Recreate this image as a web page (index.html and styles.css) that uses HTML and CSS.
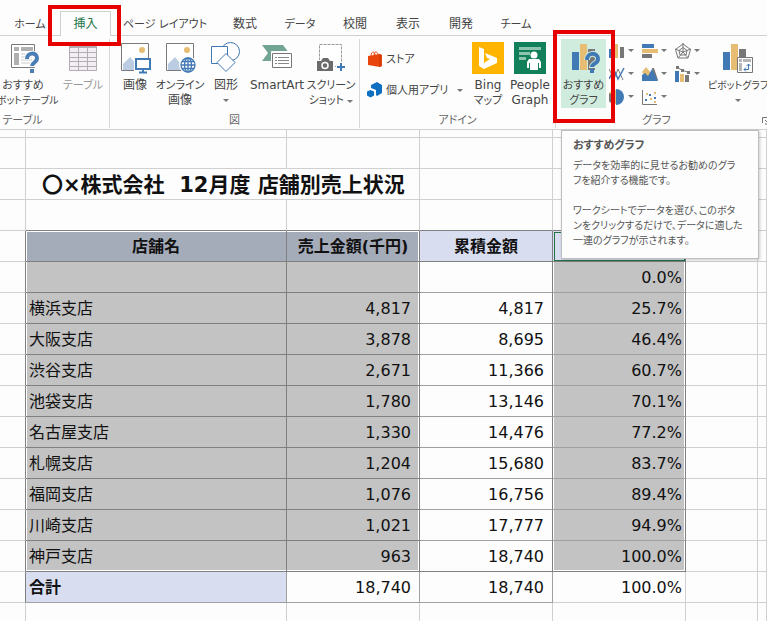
FILE: index.html
```html
<!DOCTYPE html>
<html lang="ja">
<head>
<meta charset="utf-8">
<title>店舗別売上状況</title>
<link rel="stylesheet" href="styles.css">
</head>
<body>
<header class="ribbon">
  <nav class="tabs">
    <a href="#" class="kana">ホーム</a>
    <a href="#" class="active">挿入</a>
    <a href="#" class="kana">ページ レイアウト</a>
    <a href="#">数式</a>
    <a href="#" class="kana">データ</a>
    <a href="#">校閲</a>
    <a href="#">表示</a>
    <a href="#">開発</a>
    <a href="#" class="kana">チーム</a>
  </nav>
  <div class="groups">
    <section class="group">
      <div class="items tables">
        <button class="big">
          <svg width="32" height="32" viewBox="0 0 32 32"><path d="M4.500 2.500H27.500V25.500H4.500z" fill="#fff" stroke="#7a7a7a"/><path d="M7 5h5v4H7zM14 5h12v4H14zM7 11h5v12H7z" fill="#b0b0b0"/><path d="M14 12h11M14 15h11M14 18h11M14 21h11" stroke="#ccc"/><path d="M20 17c0-7 10-7 10-1 0 5-5 4-5 9" fill="none" stroke="#fff" stroke-width="6"/><path d="M20 17c0-7 10-7 10-1 0 5-5 4-5 8" fill="none" stroke="#4a7eb5" stroke-width="4"/><path d="M23 27h4v4h-4z" fill="#4a7eb5"/></svg>
          <span class="kana">おすすめ</span><span class="long">ピボットテーブル</span>
        </button>
        <button class="big dim">
          <svg width="32" height="32" viewBox="0 0 32 32"><path d="M2.500 1.500H29.500V28.500H2.500z" fill="#f3eef3" stroke="#b3adb3"/><path d="M2 1h28v5H2z" fill="#b3adb3"/><path d="M2 10.500h28M2 15.500h28M2 19.500h28M2 24.500h28M11.500 6v22M20.500 6v22" stroke="#b3adb3"/></svg>
          <span class="kana">テーブル</span>
        </button>
      </div>
      <h2>テーブル</h2>
    </section>
    <section class="group">
      <div class="items shapes">
        <button class="big">
          <svg width="32" height="32" viewBox="0 0 32 32"><path d="M2.500 1.500h27v27h-27z" fill="#fff" stroke="#7a7a7a"/><circle cx="23" cy="8" r="3" fill="#e6bd72"/><path d="M4 28V22l7-7 6 7v6z" fill="#bccde3"/><path d="M15 16h17v14H15z" fill="#fff"/><path d="M17 17h14v10H17z" fill="#fff" stroke="#4179b5" stroke-width="2"/><path d="M24 27v3M20 30.500h8" stroke="#4179b5" stroke-width="2"/></svg>
          <span>画像</span>
        </button>
        <button class="big">
          <svg width="32" height="32" viewBox="0 0 32 32"><path d="M2.500 1.500h27v27h-27z" fill="#fff" stroke="#7a7a7a"/><circle cx="23" cy="8" r="3" fill="#e6bd72"/><path d="M4 28V22l7-7 6 7v6z" fill="#bccde3"/><circle cx="24" cy="23" r="9" fill="#fff"/><g fill="#fff" stroke="#4179b5" stroke-width="1.300"><circle cx="24" cy="23" r="7"/><ellipse cx="24" cy="23" rx="3.500" ry="7"/><path d="M17 23h14M24 16v14M18 19.500h12M18 26.500h12"/></g></svg>
          <span class="kana">オンライン</span><span>画像</span>
        </button>
        <button class="big">
          <svg width="32" height="32" viewBox="0 0 32 32"><g fill="#fff" stroke="#4179b5"><circle cx="20.500" cy="9.500" r="9"/><path d="M1.500 4.500h16v17h-16z"/><path d="M16 11.500 25 20.500 16 29.500 7 20.500z"/></g></svg>
          <span>図形</span><span><i class="arrow"></i></span>
        </button>
        <button class="big">
          <svg width="32" height="32" viewBox="0 0 32 32"><path d="M1 3h21l6 8-6 8H1l6-8z" fill="#72a493"/><path d="M10 9h22v17H10z" fill="#fff"/><path d="M11.500 11.500h19v14h-19z" fill="#fff" stroke="#777"/><path d="M14 15.500h2M14 18.500h2M14 21.500h2M17 15.500h11M17 18.500h11M17 21.500h11" stroke="#888"/></svg>
          <span>SmartArt</span>
        </button>
        <button class="big">
          <svg width="32" height="32" viewBox="0 0 32 32"><path d="M4.500 2.500h22v22h-22z" fill="#fff" stroke="#999" stroke-dasharray="3 1"/><path d="M0 18h20v13H0z" fill="#fff"/><path d="M2 19h4l2-3h5l2 3h3v10H2z" fill="#6b6b6b"/><circle cx="10" cy="23.500" r="3" fill="#6b6b6b" stroke="#fff" stroke-width="1.500"/><path d="M21 20h10v10H21z" fill="#fff"/><path d="M22 25h8M26 21v8" stroke="#4179b5" stroke-width="2"/></svg>
          <span class="kana">スクリーン</span><span class="kana">ショット <i class="arrow"></i></span>
        </button>
      </div>
      <h2>図</h2>
    </section>
    <section class="group">
      <div class="items addins">
        <div class="list">
          <button class="row">
            <svg width="16" height="16" viewBox="0 0 16 16"><path d="M1 5 13 3l2 1v11l-2 1L1 14z" fill="#e8450c"/><path d="M4 5c0-5 4-5 4-1M7 4c0-4 4-4 4 0" fill="none" stroke="#e8450c"/><path d="M13 3v13" stroke="#c23400"/></svg>
            <span class="kana">ストア</span>
          </button>
          <button class="row">
            <svg width="16" height="16" viewBox="0 0 16 16"><path d="M4 3 10 0l5 3v8l-5 3-1-1V8L4 6z" fill="#0f6fc0"/><path d="M0 9.500 3.500 8 7 9.500v4L3.500 15.500 0 13.500z" fill="#0f6fc0"/></svg>
            <span class="kana">個人用アプリ</span><i class="arrow"></i>
          </button>
        </div>
        <button class="big">
          <svg width="32" height="32" viewBox="0 0 32 32"><path d="M0 0h32v32H0z" fill="#ffb400"/><path d="M7 5l5 2v14l6-4-3-1-2-5 12 5v5L12 27l-5-3z" fill="#fff"/></svg>
          <span>Bing</span><span class="kana">マップ</span>
        </button>
        <button class="big">
          <svg width="32" height="32" viewBox="0 0 32 32"><path d="M0 0h32v32H0z" fill="#12805a"/><path d="M5 5h22v3H5zM5 10h11v3H5zM5 15h7v3H5z" fill="#8dc5af"/><circle cx="20" cy="13" r="3.500" fill="#fff"/><path d="M15 17h10l2 3v6h-3v2h-8v-2h-3v-6z" fill="#fff"/><path d="M15.500 21v6M24.500 21v6" stroke="#12805a"/></svg>
          <span>People</span><span>Graph</span>
        </button>
      </div>
      <h2>アドイン</h2>
    </section>
    <section class="group">
      <div class="items charts">
        <button class="big chosen">
          <svg width="32" height="32" viewBox="0 0 32 32"><path d="M4 10h7v18H4z" fill="#4179b5"/><path d="M12 2h7v26h-7z" fill="#e6bd72"/><path d="M20 7h7v21h-7z" fill="#777"/><path d="M19 18c0-8 11-8 11-1 0 5-6 4-6 9" fill="none" stroke="#d0ecde" stroke-width="6"/><path d="M19 18c0-8 11-8 11-1 0 5-6 4-6 8" fill="none" stroke="#4179b5" stroke-width="4"/><path d="M22 27h4v4h-4z" fill="#4179b5"/></svg>
          <span class="kana">おすすめ</span><span class="kana">グラフ</span>
        </button>
        <div class="minis">
          <button class="mini" aria-label="縦棒"><svg width="16" height="16" viewBox="0 0 16 16"><path d="M0 6h4v9H0z" fill="#4179b5"/><path d="M5 1h4v14H5z" fill="#e6bd72"/><path d="M11 4h4v11h-4z" fill="#777"/></svg><i class="arrow"></i></button>
          <button class="mini" aria-label="横棒"><svg width="16" height="16" viewBox="0 0 16 16"><path d="M0 1h12v4H0z" fill="#4179b5"/><path d="M0 6h16v4H0z" fill="#e6bd72"/><path d="M0 11h10v4H0z" fill="#777"/></svg><i class="arrow"></i></button>
          <button class="mini" aria-label="レーダー"><svg width="16" height="16" viewBox="0 0 16 16"><g fill="none" stroke="#777"><path d="M8 1 15.500 6.500 13 15H3L.5 6.500z"/><path d="M8 4.500 12 7.500 11 12H5L4 7.500z"/><path d="M8 0v9M0 6l8 3 8-3M3 15l5-6 5 6"/></g></svg><i class="arrow"></i></button>
          <button class="mini" aria-label="折れ線"><svg width="16" height="16" viewBox="0 0 16 16"><path d="M0 3l5 10 4-10 5 11" fill="none" stroke="#777"/><path d="M0 13 5 4l4 9 6-11" fill="none" stroke="#4179b5" stroke-width="1.500"/></svg><i class="arrow"></i></button>
          <button class="mini" aria-label="面"><svg width="16" height="16" viewBox="0 0 16 16"><path d="M0 6l4-5 6 7-5 5z" fill="#e6bd72"/><path d="M10 2h2l4 12h-4z" fill="#777"/><path d="M0 15V9l3-2 3 3 4-7 6 12z" fill="#4179b5"/></svg><i class="arrow"></i></button>
          <button class="mini" aria-label="複合"><svg width="16" height="16" viewBox="0 0 16 16"><path d="M0 5h4v11H0z" fill="#4179b5"/><path d="M5 8h4v8H5z" fill="#e6bd72"/><path d="M10 9h4v7h-4z" fill="#777"/><path d="M2 1.500 8 4.500 14 6.500" fill="none" stroke="#777"/><path d="M1 0h3v3H1zM6 3h3v3H6zM12 5h3v3h-3z" fill="#777"/></svg><i class="arrow"></i></button>
          <button class="mini" aria-label="円"><svg width="16" height="16" viewBox="0 0 16 16"><circle cx="6" cy="8" r="7" fill="#e6bd72"/><path d="M6 8V15A7 7 0 0 1 0 4z" fill="#777"/><path d="M7 8V0a8 8 0 0 1 0 16z" fill="#4179b5"/></svg><i class="arrow"></i></button>
          <button class="mini" aria-label="散布図"><svg width="16" height="16" viewBox="0 0 16 16"><path d="M.5 1v14.500H15" fill="none" stroke="#777"/><path d="M3 10h2v2H3zM7 5h2v2H7zM12 8h2v2h-2z" fill="#4179b5"/><path d="M4 4h2v2H4zM8 9h2v2H8zM12 3h2v2h-2zM12 12h2v2h-2z" fill="#e6bd72"/></svg><i class="arrow"></i></button>
        </div>
        <button class="big">
          <svg width="32" height="32" viewBox="0 0 32 32"><path d="M1 10h7v18H1z" fill="#4179b5"/><path d="M9 2h7v26H9z" fill="#e6bd72"/><path d="M17 7h7v8h-7z" fill="#777"/><path d="M15.500 15.500h15v15h-15z" fill="#fff" stroke="#777"/><path d="M17 17h3v3h-3zM21 17h8v3h-8zM17 21h3v8h-3z" fill="#b5b5b5"/><path d="M22 27.500h4.500V22M24 25.500l-2 2 2 2M24.500 24l2-2 2 2" fill="none" stroke="#4179b5"/></svg>
          <span class="long">ピボットグラフ</span><span><i class="arrow"></i></span>
        </button>
      </div>
      <h2>グラフ</h2>
      <svg class="launcher" width="8" height="8" viewBox="0 0 8 8"><path d="M.5 6V.5H7M3 3l4 4M7 3v4H3" fill="none" stroke="#777"/></svg>
    </section>
  </div>
  <div class="mark mark-tab"></div>
  <div class="mark mark-chart"></div>
  <div class="tooltip" role="tooltip">
    <strong>おすすめグラフ</strong>
    <p>データを効率的に見せるお勧めのグラ<br>フを紹介する機能です。</p>
    <p>ワークシートでデータを選び、このボタ<br>ンをクリックするだけで、データに適した<br>一連のグラフが示されます。</p>
  </div>
</header>
<main>
  <table class="sheet">
    <colgroup><col class="c-a"><col class="c-b"><col class="c-n"><col class="c-n"><col class="c-n"><col class="c-f"><col></colgroup>
    <tbody>
    <tr class="cut"><td></td><td></td><td></td><td></td><td></td><td></td><td></td></tr>
    <tr><td></td><td></td><td></td><td></td><td></td><td></td><td></td></tr>
    <tr><td></td><th class="title" colspan="2">〇×株式会社&nbsp; 12月度 店舗別売上状況</th><td></td><td></td><td></td><td></td></tr>
    <tr class="above"><td></td><td></td><td></td><td></td><td></td><td></td><td></td></tr>
    <tr class="head"><td></td><th>店舗名</th><th>売上金額(千円)</th><th>累積金額</th><th></th><td></td><td></td></tr>
    <tr class="data"><td></td><td></td><td></td><td></td><td>0.0%</td><td></td><td></td></tr>
    <tr class="data"><td></td><td>横浜支店</td><td>4,817</td><td>4,817</td><td>25.7%</td><td></td><td></td></tr>
    <tr class="data"><td></td><td>大阪支店</td><td>3,878</td><td>8,695</td><td>46.4%</td><td></td><td></td></tr>
    <tr class="data"><td></td><td>渋谷支店</td><td>2,671</td><td>11,366</td><td>60.7%</td><td></td><td></td></tr>
    <tr class="data"><td></td><td>池袋支店</td><td>1,780</td><td>13,146</td><td>70.1%</td><td></td><td></td></tr>
    <tr class="data"><td></td><td>名古屋支店</td><td>1,330</td><td>14,476</td><td>77.2%</td><td></td><td></td></tr>
    <tr class="data"><td></td><td>札幌支店</td><td>1,204</td><td>15,680</td><td>83.7%</td><td></td><td></td></tr>
    <tr class="data"><td></td><td>福岡支店</td><td>1,076</td><td>16,756</td><td>89.4%</td><td></td><td></td></tr>
    <tr class="data"><td></td><td>川崎支店</td><td>1,021</td><td>17,777</td><td>94.9%</td><td></td><td></td></tr>
    <tr class="data last"><td></td><td>神戸支店</td><td>963</td><td>18,740</td><td>100.0%</td><td></td><td></td></tr>
    <tr class="total"><td></td><th>合計</th><td>18,740</td><td>18,740</td><td>100.0%</td><td></td><td></td></tr>
    <tr><td></td><td></td><td></td><td></td><td></td><td></td><td></td></tr>
    </tbody>
  </table>
</main>
</body>
</html>
```
FILE: styles.css
```css
* { box-sizing: border-box; }
body {
  margin: 0;
  background: #fdfdfd;
  color: #444;
  font: 12px/15px "DejaVu Sans", "Noto Sans CJK JP", sans-serif;
  overflow: hidden;
}
button {
  border: 0;
  padding: 0;
  background: none;
  color: inherit;
  font: inherit;
  font-feature-settings: inherit;
}
svg { display: block; flex: none; }
.kana { font-size: 11px; }
.long { font-size: 10px; }

.ribbon {
  position: relative;
  font-feature-settings: "palt";
  border-bottom: 1px solid #d0d0d0;
}
.tabs {
  display: grid;
  grid-template-columns: 60px 51px 108px 52px 58px 52px 54px 52px 58px;
  height: 36px;
  padding-top: 11px;
  border-bottom: 1px solid #d0d0d0;
}
.tabs a {
  display: flex;
  align-items: center;
  justify-content: center;
  padding-top: 2px;
  color: #444;
  text-decoration: none;
  white-space: nowrap;
}
.tabs .active {
  margin-bottom: -1px;
  padding-top: 0;
  border: 1px solid #d0d0d0;
  border-bottom: 0;
  background: #fdfdfd;
  color: #217346;
}
.groups {
  display: grid;
  grid-template-columns: 110px 250px 196px 1fr;
  height: 93px;
  overflow: hidden;
}
.group {
  position: relative;
  display: flex;
  flex-direction: column;
  justify-content: space-between;
  margin: 3px 0 1px;
  border-right: 1px solid #d8d8d8;
}
.group:last-child { border-right: 0; }
.group h2 {
  margin: 0;
  color: #666;
  font-size: 11px;
  font-weight: 400;
  line-height: 15px;
  text-align: center;
}
.group:first-child h2 { padding-right: 64px; }
.group:last-child h2 { padding-right: 10px; }
.items { display: grid; height: 69px; }
.tables { grid-template-columns: 46px 46px; gap: 14px; }
.shapes { grid-template-columns: 46px 44px 48px 54px 54px; padding-left: 2px; }
.addins { grid-template-columns: 106px 44px 40px; }
.charts { grid-template-columns: 45px 99px 54px; column-gap: 3px; padding-left: 5px; }
.big {
  display: flex;
  flex-direction: column;
  align-items: center;
  padding-top: 3px;
  min-width: 0;
  white-space: nowrap;
}
.big svg { margin-bottom: 4px; }
.dim { color: #999; }
.chosen { background: #d0ecde; }
.arrow {
  display: inline-block;
  flex: none;
  border: 3px solid transparent;
  border-top-color: #777;
  border-bottom: 0;
  vertical-align: middle;
}
.list { display: flex; flex-direction: column; padding: 5px 3px 0 7px; gap: 1px; }
.row { display: flex; align-items: center; gap: 3px; height: 30px; white-space: nowrap; }
.row .arrow { margin-left: auto; }
.minis {
  display: grid;
  grid-template-columns: repeat(3, 33px);
  grid-template-rows: repeat(3, 23px);
}
.mini { display: flex; align-items: center; gap: 3px; }
.launcher { position: absolute; right: -3px; bottom: 3px; }
.mark { position: absolute; border: 4px solid #e60000; }
.mark-tab { left: 48px; top: 5px; width: 73px; height: 41px; }
.mark-chart { left: 553px; top: 30px; width: 62px; height: 93px; }
.tooltip {
  position: absolute;
  left: 561px;
  top: 130px;
  width: 198px;
  padding: 7px 0 10px 11px;
  border: 1px solid #bebebe;
  background: #fdfdfd;
  box-shadow: 1px 1px 3px #0003;
  color: #555;
  font-size: 11px;
  white-space: nowrap;
}
.tooltip p { margin: 5px 0 0; font-size: 10px; }
.tooltip p + p { margin-top: 15px; }

.sheet {
  width: 100%;
  table-layout: fixed;
  border-collapse: separate;
  border-spacing: 0;
  color: #111;
  font-size: 16px;
  line-height: 24px;
}
.c-a { width: 26px; }
.c-b { width: 261px; }
.c-n { width: 133px; }
.c-f { width: 72px; }
.sheet td, .sheet th {
  height: 31px;
  padding: 2px 3px 0;
  border: solid #d0d0d0;
  border-width: 0 1px 1px 0;
  white-space: nowrap;
}
.sheet .cut td { height: 8px; }
.sheet .title {
  padding-left: 16px;
  font-size: 21px;
  text-align: left;
}
.sheet tr:nth-child(n+5):nth-child(-n+16) td:first-child { border-right-color: #808080; }
.above td:nth-child(n+2):nth-child(-n+5) { border-bottom-color: #808080; }
.head th { background: #d8def0; }
.head th:nth-child(-n+3) { background: #a4abb9; }
.sheet .head th:nth-child(-n+5),
.sheet .data td:nth-child(n+2):nth-child(-n+5) { border-color: #808080; }
.sheet .data:not(.last) td:nth-child(4),
.sheet .data:not(.last) td:nth-child(5) { border-bottom-color: #a0a0a0; }
.sheet .total :nth-child(n+2):nth-child(-n+4) { border-color: #a0a0a0; }
.data td:nth-child(n+3), .total td { text-align: right; }
.total th { background: #d8def0; text-align: left; }
.sheet tr td:nth-child(3), .sheet tr td:nth-child(4) { padding-right: 8px; }
.data td:nth-child(2), .data td:nth-child(3), .data td:nth-child(5) { background: #c3c3c3; }
/* White inner edge of the selected ranges */
.head th:nth-child(2) { box-shadow: inset 1px 1px #fff; }
.head th:nth-child(3) { box-shadow: inset -1px 1px #fff; }
.head th:nth-child(5) { outline: 1px solid #217346; outline-offset: -2px; }
.data td:nth-child(2) { box-shadow: inset 1px 0 #fff; }
.data td:nth-child(3) { box-shadow: inset -1px 0 #fff; }
.data td:nth-child(5) { box-shadow: inset -1px 0 #fff, inset 1px 0 #fff; }
.last td:nth-child(2) { box-shadow: inset 1px -1px #fff; }
.last td:nth-child(3) { box-shadow: inset -1px -1px #fff; }
.last td:nth-child(5) { box-shadow: inset -1px -1px #fff, inset 1px 0 #fff; }
```
